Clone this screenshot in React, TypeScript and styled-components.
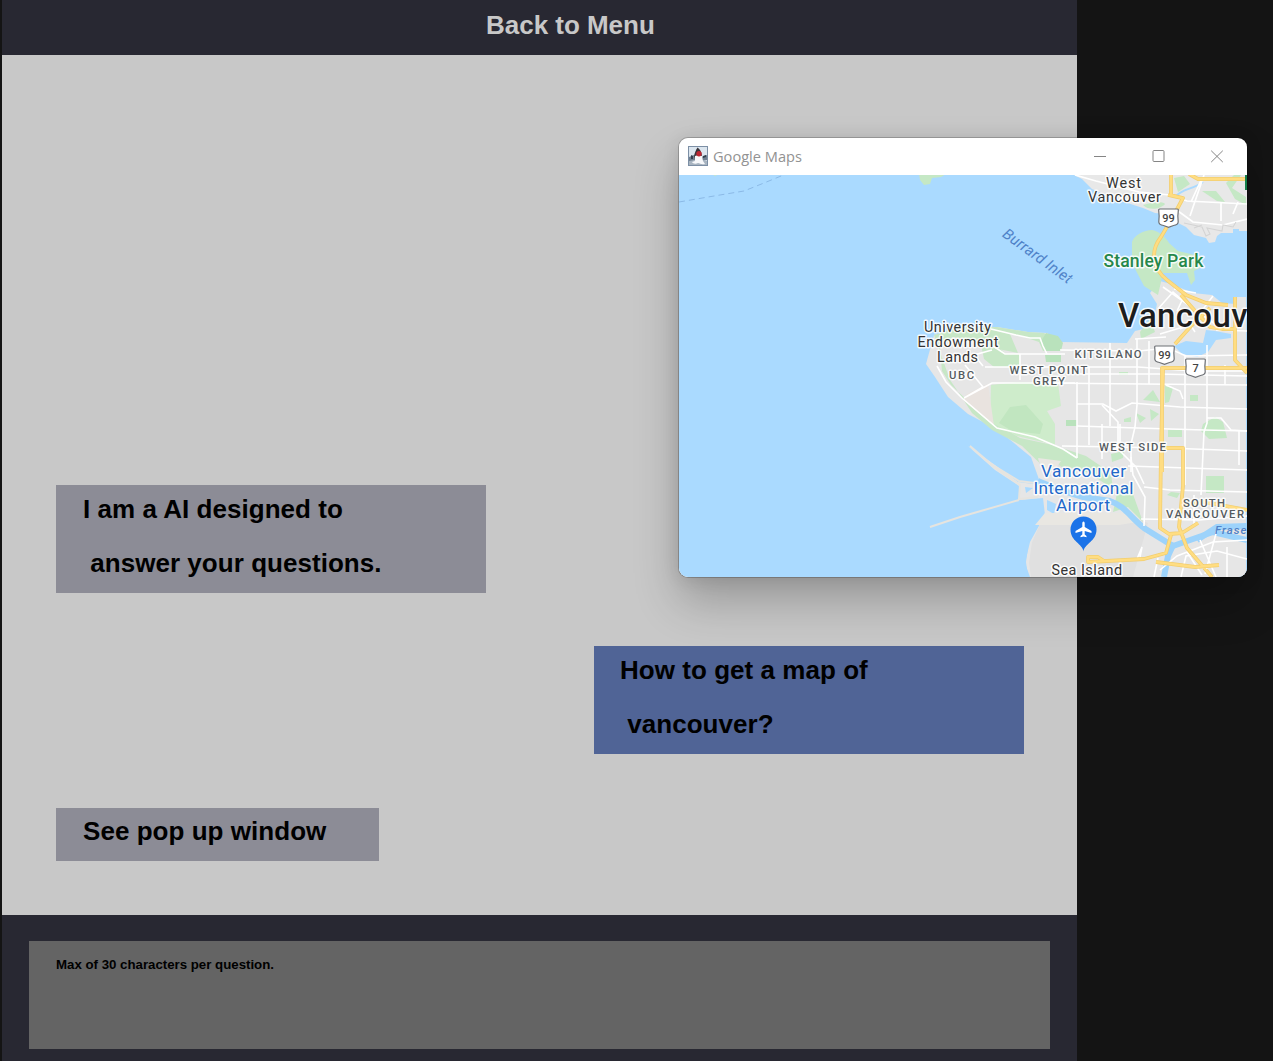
import React from "react";
import styled, { createGlobalStyle } from "styled-components";

const GlobalStyle = createGlobalStyle`
  * { box-sizing: border-box; }
  body { margin: 0; background: #141414; overflow: hidden; }
`;

const Desktop = styled.div`
  position: relative;
  width: 1273px;
  height: 1061px;
  padding-left: 2px;
  background: #141414;
  overflow: hidden;
  font-family: "Liberation Sans", Arial, sans-serif;
`;

const ChatApp = styled.main`
  display: flex;
  flex-direction: column;
  width: 1075px;
  height: 1061px;
  background: #c8c8c8;
`;

const MenuBar = styled.header`
  height: 55px;
  flex: none;
  padding-left: 484px;
  background: #282832;
`;

const MenuButton = styled.button`
  display: block;
  border: 0;
  padding: 0;
  background: none;
  color: #c8c8c8;
  font: bold 26px/50px "Liberation Sans", Arial, sans-serif;
  letter-spacing: -0.02px;
  white-space: nowrap;
`;

const Conversation = styled.section`
  display: flex;
  flex-direction: column;
  flex: 1;
  padding: 430px 53px 0 54px;
`;

const Bubble = styled.div<{ $mine?: boolean; $width: number; $lines: number }>`
  align-self: ${(p) => (p.$mine ? "flex-end" : "flex-start")};
  flex: none;
  width: ${(p) => p.$width}px;
  height: ${(p) => (p.$lines > 1 ? 108 : 53)}px;
  margin-bottom: ${(p) => (p.$mine ? 54 : 53)}px;
  padding-left: ${(p) => (p.$mine ? 26 : 27)}px;
  line-height: ${(p) => (p.$lines > 1 ? 48 : 46)}px;
  background: ${(p) => (p.$mine ? "#506496" : "#8c8c96")};
`;

const Line = styled.p`
  margin: 0;
  height: 54px;
  color: #000;
  font-size: 26px;
  font-weight: bold;
  letter-spacing: 0.04px;
  white-space: pre;
`;

const Footer = styled.footer`
  height: 146px;
  flex: none;
  padding: 26px 27px 12px;
  background: #282832;
`;

const Prompt = styled.div`
  height: 108px;
  padding: 16px 27px;
  background: #646464;
  color: #000;
  font-size: 13.25px;
  font-weight: bold;
  line-height: 16px;
  white-space: nowrap;
`;

const PopupWindow = styled.section`
  position: absolute;
  left: 679px;
  top: 138px;
  width: 568px;
  height: 439px;
  display: flex;
  flex-direction: column;
  border-radius: 9px;
  overflow: hidden;
  background: #fff;
`;

const PopupShadow = styled.div`
  position: absolute;
  left: 679px;
  top: 138px;
  width: 568px;
  height: 439px;
  border-radius: 9px;
  box-shadow: 0 0 0 1px rgba(0, 0, 0, 0.2), 0 24px 46px rgba(0, 0, 0, 0.24), 0 2px 18px rgba(0, 0, 0, 0.1);
`;

const TitleBar = styled.div`
  display: flex;
  align-items: center;
  height: 37px;
  flex: none;
  padding: 0 23px 2px 9px;
`;

const Title = styled.span`
  flex: 1;
  margin-left: 5px;
  color: #929292;
  font: 14.6px/20px "Open Sans", "Noto Sans", sans-serif;
`;

const Controls = styled.div`
  display: flex;
  gap: 44.5px;
`;

const MapSvg = styled.svg`
  display: block;
  width: 568px;
  height: 402px;
  flex: none;
`;

const Place = styled.text<{ $size: number; $color?: string; $weight?: number }>`
  font-family: Roboto, sans-serif;
  font-size: ${(p) => p.$size}px;
  font-weight: ${(p) => p.$weight ?? 400};
  fill: ${(p) => p.$color ?? "#333"};
  stroke: rgba(255, 255, 255, 0.85);
  stroke-width: 3px;
  stroke-linejoin: round;
  paint-order: stroke;
`;

type LabelData = [text: string, x: number, y: number, width: number, size: number, color?: string, weight?: number];

const labels: LabelData[] = [
  ["West", 1106, 187.5, 35, 14.4],
  ["Vancouver", 1088, 202, 73, 14.4],
  ["Stanley Park", 1103.5, 266.5, 100, 17.6, "#26874b", 500],
  ["Vancouv", 1118, 327, 129.5, 33, "#1d1d1d", 500],
  ["University", 924, 332, 67, 14.4],
  ["Endowment", 917.5, 346.5, 81, 14.4],
  ["Lands", 937, 361.5, 41, 14.4],
  ["UBC", 949, 378.5, 25, 11.3, "#555b60", 500],
  ["WEST POINT", 1009.5, 373.5, 78, 11.3, "#555b60", 500],
  ["GREY", 1033, 384.5, 32, 11.3, "#555b60", 500],
  ["KITSILANO", 1074.5, 358, 67, 11.3, "#555b60", 500],
  ["WEST SIDE", 1099, 451, 67, 11.3, "#555b60", 500],
  ["SOUTH", 1183, 506.5, 42, 11.3, "#555b60", 500],
  ["VANCOUVER", 1166, 517.5, 78, 11.3, "#555b60", 500],
  ["Vancouver", 1041, 477, 85, 17.2, "#2268c9"],
  ["International", 1033.5, 494, 100, 17.2, "#2268c9"],
  ["Airport", 1056, 511, 54, 17.2, "#2268c9"],
  ["Sea Island", 1051.5, 574.5, 70.5, 14.4],
];

const DukeIcon = () => (
  <svg width="20" height="20" viewBox="0 0 20 20">
    <rect x=".5" y=".5" width="19" height="19" fill="#dce6ef" stroke="#7c8fa5" />
    <path d="M1 11l5-2 1 5-6 3zM13 11l6-2v5l-5 1z" fill="#6f7f90" />
    <path d="M1 15l6-1h7l5 1v4H1z" fill="#a8b4c0" />
    <path d="M9.5 1.5C12 3 13.5 6 14 10l-1 4H7L6 10C7 6 8 4 9.5 1.5z" fill="#38353b" />
    <path d="M7 10c2-1 5-1 7 0l1 5 2 3c-4 1-5-1-7-1-2 1-5 1-6-1l3-1z" fill="#f7f8fa" />
    <circle cx="11" cy="7.7" r="2.7" fill="#bd2733" />
    <path d="M3 9l2 1v3H3zM15 10l3-1v2l-3 1z" fill="#33404f" />
  </svg>
);

const Shield = ({ x, y, n }: { x: number; y: number; n: string }) => (
  <g transform={`translate(${x} ${y})`}>
    <path d="M-8.7-9H8.7Q10-9 9.8-7.4 9-3 9.7 4 9.5 7 5 7.5L0 9.4-5 7.5Q-9.5 7-9.7 4-9-3-9.8-7.4-10-9-8.7-9z" fill="#fff" stroke="#6d7075" strokeWidth="1.2" />
    <text y="3.9" textAnchor="middle" fontFamily="Roboto, sans-serif" fontSize="11" fontWeight="500" fill="#444">{n}</text>
  </g>
);

const VancouverMap = () => (
  <MapSvg viewBox="679 175 568 402">
    <rect x="679" y="175" width="568" height="402" fill="#aadaff" />
    <path d="M679 202l35-6 30-5 20-8 22-9" fill="none" stroke="#8bb9e6" strokeWidth="1" strokeDasharray="6 4" />
    <path d="M712 174h7l-4 2zM919 174h27l-5 3-9 1-2 6-6 1-4-5z" fill="#c5e8c5" />

    {/* North shore */}
    <path d="M1072 174h175v57h-8v-2h-6v4h-12l-4 3-2 6-6 1-3-5-12-3-8-8-12-6-9-7-10-1-12-5-31-10-20-9-10-10z" fill="#e8e8e8" />
    <path d="M1174 178l10-2 6 8-12 8zM1202 191l14 0 9 11-8-1zM1226 183l8-8h7l-9 13 14 9v8l-11-6z" fill="#c5e8c5" />
    <path d="M1143 205c8-3 21-4 22-1-3 4-15 8-22 1z" fill="#c5e8c5" />
    <path d="M1175 197c8-9 17-7 28-15" fill="none" stroke="#aadaff" strokeWidth="2" />
    <g fill="none" stroke="#fff" strokeWidth="1.7">
      <path d="M1075 175l21 6 43 11 31 3 17 6 60 3M1190 216l14-41M1178 211l15 11 30 3 24-6M1221 203v18M1238 202l-5 12M1202 178l-11 24" />
    </g>
    <g fill="none" stroke="#d4d4d4" strokeWidth="1.1">
      <path d="M1184 223l18 4 4 9 4-2-3-6 15 3 1-6 10 2 3-5M1194 228l8-3" />
    </g>

    {/* Peninsula and city */}
    <path d="M934 335l22-7 41-1 31 5 19 1 13 9 67 1 8-12 17-4 5-23-7-11 10-12 11 3 22 9 19 2 10 8 14 1 1-7h9V577H1030l-5-14 5-21 15-27-2-17-23 2-1-14-24-16-27-24 27 19 23 17 23 3-10-28-33-27-30-16-20-17-13-20-9-13z" fill="#e6e6e6" />
    <path d="M934 335l22-7 41-1 31 5 16 1 12 9-4 9h-9l-4-9-18-6-11-2 8 19-20-4-20-7-25-5-13 11 2 23 9 14 18 17 22 19 29 17 33 7 33 11 25 17 2 16-24-16-24-7-12 10-31-30-30-16-20-17-13-20-9-13z" fill="#c7e7c6" />
    <path d="M980 340l14 3 12 11h13l1 13h-26l-10-8z" fill="#c7e7c6" />
    <path d="M991 385l27-3 40 1 3 23-14 5 8 13v21l-38-9-27-14z" fill="#ceeccb" />
    <path d="M1010 407l16-2 17 19-3 10-28-3-13-8z" fill="#c1e6c0" />
    <path d="M1046 333l12 3 5 7-2 8h-15l-6-8zM1045 355h16v7h-15zM1066 420h11v6h-11z" fill="#b9e2bc" />
    <path d="M967 394l21-10 6 42-31-26z" fill="#e9e3df" />
    <path d="M970 446l21 18 28 17 24 3-6 13-18 2 1-14-25-17zM930 527l30-10 59-17" fill="none" stroke="#e6e4df" strokeWidth="2" />
    <path d="M1025 487l8 1-7 5zM1047 500l9 4-2 10-7-4z" fill="#aadaff" />
    <path d="M1024 579v-38l5-1-3 22 2 15z" fill="#aadaff" />
    <path d="M1038 459l17 2 13 12-24 4zM1045 513h78l25 10-15 54h-102l-2-14 3-21z" fill="#e0e0e0" />
    <path d="M1045 513h78l20 8-24 4h-84zM1038 458l23 3-10 14-8-6z" fill="#e9e7e2" />

    {/* Parks */}
    <path d="M1132 242c2-7 12-12 20-12 8 1 15 9 17 13l9 8 25 6-1 10-8 4 1 9-4 5-4-12-24 0-5 22-14-9-12-23z" fill="#c5e8c5" />
    <path d="M1140 332l10-13 5 13-14 7zM1119 372h9v3h-9zM1143 400l10-10 7 12zM1150 409l9 5-8 7zM1165 386l8 2-4 14-4 1zM1190 395h8v6h-8zM1203 424l12-7 8 5 4 16-18 1-8-8zM1168 430h14v7h-14zM1136 413l10 5-6 5zM1124 419l7-2v5h-7z" fill="#c5e8c5" />
    <path d="M1206 476h18v17h-18zM1111 454l13-3-1 7-11 4zM1118 487l12-1 13 36-15-15-15 5 3-14zM1065 450l13 8 12 11-28-5zM1167 495l4-3 9 1-3 5z" fill="#c5e8c5" />

    {/* Inlets and the Fraser River */}
    <path d="M1174 346l12-5 17 2 3-13 9 1 16 3v4l-15 2-8 12-11 5-15-3z" fill="#aadaff" />
    <path d="M1038 481l22 9 23 7 27 4c15 5 20 16 34 27l16 10 13 8 20-7 20-7 34 8" fill="none" stroke="#9dd3fb" strokeWidth="6" />
    <path d="M1197 540l20-13 30-1M1174 543l-6 13-4 21" fill="none" stroke="#9dd3fb" strokeWidth="6" />

    {/* Local streets */}
    <g fill="none" stroke="#fff" strokeWidth="1.6">
      <path d="M1060 350l79 1 29-3 18 8 61-1M1000 367h70l68 0 55 4h54M1040 383l207 2M1080 374h78l89 2M1077 404l26 0 13 7 16-8 48 4 67 2M1077 426l60 2 67 2 43 1M1062 446l55 1 50 1 80 3M1128 466l119 4M1144 487l26 3 77 2M1141 519l58 1 48-4" />
      <path d="M1077 382v76M1089 366v79M1110 343v83M1137 339v47l0 19-2 22-4 17v28M1149 341v43M1185 356v50l0 79M1207 345v78l-3 9-3 63M1225 365v20M1120 424v24M1239 430v35M1102 424v35M1194 495v30" />
      <path d="M1102 405l16 17v24M1166 385l14 6 3 8M1207 418l14 0 10 12 16 1M1131 457l2 18 12 22-1 29M1116 447l20 20 8 17" />
      <path d="M1075 383h-83l-28 15 19-11-18-22M937 366l9 16 16 16 35 30 38 9 28 12 14 9M983 366l-9-11 18-5M991 329l25 6 14 3 10 0 3 8 4 8 18 0M1020 354v26M1047 354h-42l-12-8M1000 367h-15" />
      <path d="M1163 287l34 24 18 13M1158 309l15-17 30 25M1174 289l22 4M1185 294l-8 17M1213 296l-16 21M1160 334l33-10M1216 330l31 1M1135 339l31-2M1180 329l10-5 5 8" />
      <path d="M1160 570l17-14 36-14 34-2M1181 577l5-21 31-5 30 8M1200 540l16 37M1217 530l-12 44M1227 547v30M1187 552l15 23M1158 558l-4 19M1137 559l5-12-2 10" />
    </g>

    {/* Highways */}
    {["#f2ce70", "#ffdd82"].map((color, i) => (
      <g key={color} fill="none" stroke={color} strokeWidth={i ? 2.3 : 3.8} strokeLinejoin="round">
        <path d="M1171 175v20l12 3-9 17-13 22c-11 14-9 31 6 43l19 15 20 8 22 2M1189 174l9 5 49 0M1168 195l13 3M1181 295l15 17 14 15 12 2h13M1210 308l-18 17-17 19M1235 297v63l12 13M1162 472v-104h85M1163 368l-2 82-1 78 9 6 13-1 16-10M1163 448h20v38l-4 41 8 21 25 29M1171 535l-5 18-22 6-56 3v-5h10l6 4M1156 562l39 5 24-2M1182 505l22-3 43 8" />
      </g>
    ))}

    <g>
      {labels.map(([text, x, y, width, size, color, weight]) => (
        <Place key={`${text}${y}`} x={x} y={y} textLength={width} $size={size} $color={color} $weight={weight}>
          {text}
        </Place>
      ))}
      <text transform="translate(1001.5 236) rotate(36)" textLength="82" fontFamily="Roboto, sans-serif" fontSize="15" fontStyle="italic" fill="#4f82c8">Burrard Inlet</text>
      <text x="1215" y="533.5" textLength="31.5" fontFamily="Roboto, sans-serif" fontSize="11.5" fontWeight="500" fontStyle="italic" fill="#4f82c8">Frase</text>
    </g>
    <Shield x={1168.5} y={218} n="99" />
    <Shield x={1164.5} y={355} n="99" />
    <Shield x={1195.5} y={368} n="7" />
    <path d="M1083.5 551.5c-1-8-13-10-13-22a13 13 0 0 1 26 0c0 12-12 14-13 22z" fill="#1b73e8" />
    <path transform="translate(1083.5 529)" d="M-1.2-6.2Q0-9 1.2-6.2V-2L8 2v2L1.2 2v3.5L3 7v1.3L0 7.4-3 8.3V7l1.8-1.5V2L-8 4V2l6.8-4z" fill="#fff" />
    <path d="M1245 175h2v15h-2z" fill="#16804c" />
  </MapSvg>
);

export default function App() {
  return (
    <Desktop>
      <GlobalStyle />
      <ChatApp>
        <MenuBar>
          <MenuButton>Back to Menu</MenuButton>
        </MenuBar>
        <Conversation>
          <Bubble $width={430} $lines={2}>
            <Line>I am a AI designed to</Line>
            <Line> answer your questions.</Line>
          </Bubble>
          <Bubble $mine $width={430} $lines={2}>
            <Line>How to get a map of</Line>
            <Line> vancouver?</Line>
          </Bubble>
          <Bubble $width={323} $lines={1}>
            <Line>See pop up window</Line>
          </Bubble>
        </Conversation>
        <Footer>
          <Prompt>Max of 30 characters per question.</Prompt>
        </Footer>
      </ChatApp>
      <PopupShadow />
      <PopupWindow>
        <TitleBar>
          <DukeIcon />
          <Title>Google Maps</Title>
          <Controls>
            <svg width="14" height="14" viewBox="0 0 14 14" fill="none" stroke="#858585"><path d="M1 7.5h12" /></svg>
            <svg width="14" height="14" viewBox="0 0 14 14" fill="none" stroke="#858585"><rect x="1" y="1.5" width="11" height="11" rx="1" /></svg>
            <svg width="14" height="14" viewBox="0 0 14 14" fill="none" stroke="#858585"><path d="M1.2 1.7l11.6 11.4M12.8 1.7L1.2 13.1" /></svg>
          </Controls>
        </TitleBar>
        <VancouverMap />
      </PopupWindow>
    </Desktop>
  );
}
